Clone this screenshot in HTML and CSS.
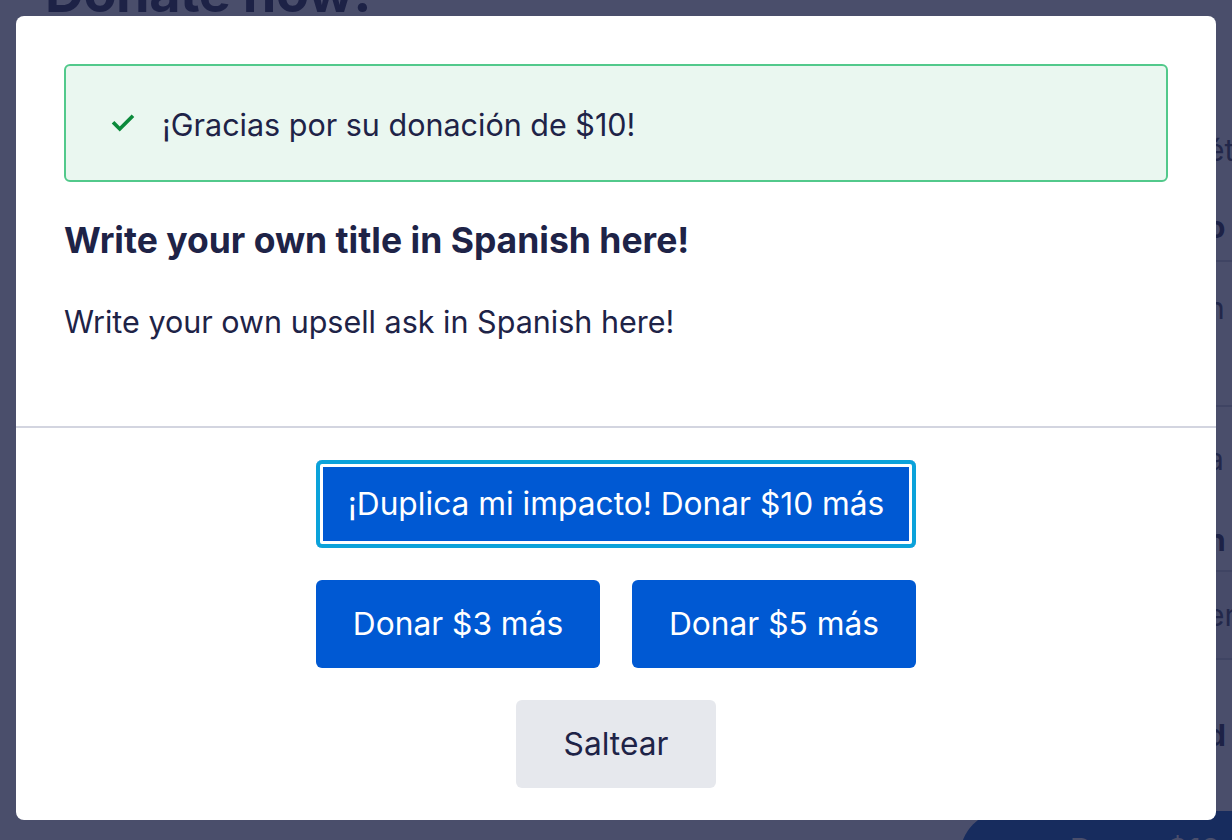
FILE: index.html
```html
<!DOCTYPE html>
<html lang="es">
<head>
<meta charset="utf-8">
<title>Donar</title>
<link rel="stylesheet" href="styles.css">
</head>
<body>
<div class="page">
  <div class="page-main">
    <h1 class="page-title">Donate now!</h1>
  </div>
  <div class="page-side">
    <div class="side-item side-a">ét</div>
    <div class="side-item side-b">o</div>
    <div class="side-item side-c">n f</div>
    <div class="side-item side-d">a</div>
    <div class="side-item side-e">n</div>
    <div class="side-item side-f">er</div>
    <div class="side-item side-g">d</div>
  </div>
  <div class="page-cta">Donar $10</div>
</div>

<div class="overlay">
  <div class="modal">
    <div class="modal-body">
      <div class="alert">
        <svg class="alert-icon" viewBox="0 0 24 24" width="24" height="24" aria-hidden="true">
          <path d="M4 12.5l5 5L20 6.5" fill="none" stroke="#0b8a3b" stroke-width="3.4" stroke-linecap="square" stroke-linejoin="miter"/>
        </svg>
        <span class="alert-text">¡Gracias por su donación de $10!</span>
      </div>
      <h2 class="modal-title">Write your own title in Spanish here!</h2>
      <p class="modal-text">Write your own upsell ask in Spanish here!</p>
    </div>
    <div class="modal-actions">
      <button class="btn btn-primary btn-wide btn-focus">¡Duplica mi impacto! Donar $10 más</button>
      <div class="btn-row">
        <button class="btn btn-primary">Donar $3 más</button>
        <button class="btn btn-primary">Donar $5 más</button>
      </div>
      <button class="btn btn-skip">Saltear</button>
    </div>
  </div>
</div>
</body>
</html>
```

FILE: styles.css
```css
* { box-sizing: border-box; }

html, body {
  margin: 0;
  padding: 0;
  height: 100%;
  overflow: hidden;
}

body {
  font-family: Inter, "Noto Sans", "Liberation Sans", sans-serif;
  color: #1e2347;
  background: #ffffff;
}

/* background page */
.page {
  display: grid;
  grid-template-columns: 1207px 1fr;
  height: 100%;
}

.page-main {
  padding-left: 45px;
}

.page-title {
  margin: -37px 0 0;
  font-size: 54px;
  line-height: 60px;
  font-weight: 700;
  color: #1e2347;
  letter-spacing: -0.5px;
}

.page-side {
  padding-top: 120px;
  display: flex;
  flex-direction: column;
  font-size: 30px;
  white-space: nowrap;
  color: #3a3f5c;
}

.side-item {
  display: flex;
  align-items: center;
}

.side-a { height: 60px; }
.side-b { height: 82px; padding-top: 14px; font-weight: 700; color: #1e2347; border-bottom: 2px solid #c9ccd8; }
.side-c { height: 145px; align-items: flex-start; padding-top: 28px; border-bottom: 2px solid #c9ccd8; }
.side-d { height: 103px; }
.side-e { height: 62px; font-weight: 700; color: #1e2347; border-bottom: 2px solid #c9ccd8; }
.side-f { height: 88px; background: #f0f1f5; border-bottom: 2px solid #c9ccd8; }
.side-g { height: 150px; font-weight: 700; color: #1e2347; }

.page-cta {
  position: fixed;
  left: 960px;
  top: 811px;
  width: 420px;
  height: 90px;
  border-radius: 45px;
  background: #0456be;
  color: #ffffff;
  font-size: 31px;
  font-weight: 500;
  padding: 20px 0 0 110px;
}

/* overlay + modal */
.overlay {
  position: fixed;
  inset: 0;
  background: rgba(29, 34, 70, 0.8);
  padding: 16px;
}

.modal {
  width: 1200px;
  background: #ffffff;
  border-radius: 8px;
}

.modal-body {
  padding: 48px 48px 84px;
}

.alert {
  height: 118px;
  display: flex;
  align-items: center;
  gap: 26px;
  padding-left: 44px;
  background: #eaf7f0;
  border: 2px solid #52c98b;
  border-radius: 6px;
}

.alert-icon {
  width: 26px;
  height: 26px;
  flex: none;
}

.alert-text {
  font-size: 30.5px;
  line-height: 40px;
  padding-top: 3px;
}

.modal-title {
  margin: 37px 0 0;
  font-size: 35.5px;
  line-height: 44px;
  font-weight: 700;
}

.modal-text {
  margin: 39px 0 0;
  font-size: 30.5px;
  line-height: 40px;
}

.modal-actions {
  border-top: 2px solid #d3d5e0;
  padding: 32px 0 32px;
  display: flex;
  flex-direction: column;
  align-items: center;
  gap: 32px;
}

.btn-row {
  display: flex;
  gap: 32px;
}

.btn {
  font-family: inherit;
  font-size: 31.7px;
  line-height: 40px;
  height: 88px;
  width: 284px;
  border: none;
  border-radius: 6px;
  cursor: pointer;
  padding: 0;
}

.btn-primary {
  background: #0059d3;
  color: #ffffff;
}

.btn-wide {
  width: 600px;
}

.btn-focus {
  box-shadow: inset 0 0 0 4px #0ba2da, inset 0 0 0 7px #ffffff;
}

.btn-skip {
  width: 200px;
  background: #e6e8ed;
  color: #1e2347;
}
```
